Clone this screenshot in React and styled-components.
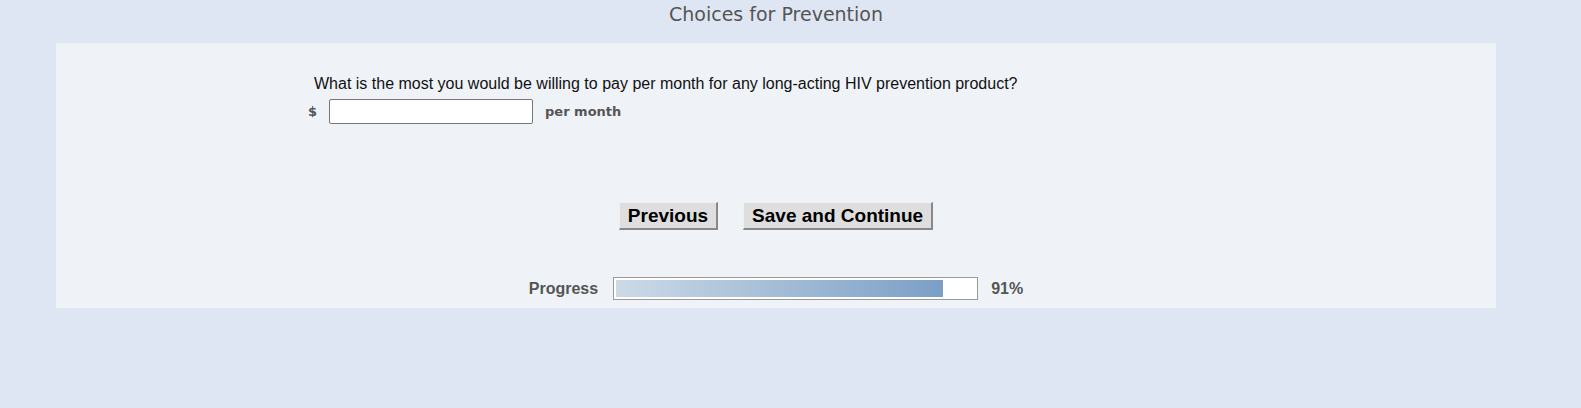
import React from "react";
import styled, { createGlobalStyle } from "styled-components";

const GlobalStyle = createGlobalStyle`
  html, body {
    margin: 0;
    padding: 0;
    background: #dfe6f3;
  }
  body {
    font-family: "Liberation Sans", Arial, sans-serif;
  }
`;

const Page = styled.div`
  width: 1440px;
  margin-left: 56px;
`;

const Title = styled.h1`
  margin: 0;
  height: 43px;
  padding-top: 3px;
  box-sizing: border-box;
  text-align: center;
  font-family: "DejaVu Sans", Tahoma, sans-serif;
  font-weight: normal;
  font-size: 19px;
  color: #555;
`;

const Panel = styled.div`
  background: #eff3f8;
  height: 265px;
  box-sizing: border-box;
  padding-top: 31px;
  display: flex;
  flex-direction: column;
`;

const QuestionBlock = styled.div`
  padding-left: 252px;
  display: flex;
  flex-direction: column;
  gap: 6px;
`;

const Question = styled.div`
  padding-left: 6px;
  font-size: 16px;
  color: #111;
  line-height: 19px;
`;

const AnswerRow = styled.div`
  display: flex;
  align-items: center;
`;

const Unit = styled.span`
  font-family: "DejaVu Sans", Verdana, sans-serif;
  font-weight: bold;
  font-size: 13px;
  color: #555;
  margin-right: ${(p) => (p.$prefix ? "12px" : "0")};
  margin-left: ${(p) => (p.$prefix ? "0" : "12px")};
`;

const Amount = styled.input`
  width: 204px;
  height: 25px;
  box-sizing: border-box;
  border: 1px solid #767676;
  border-radius: 2px;
  background: #fff;
  padding: 1px 4px;
  font-size: 14px;
`;

const Buttons = styled.div`
  margin-top: 78px;
  display: flex;
  justify-content: center;
  gap: 25px;
`;

const NavButton = styled.button`
  font-family: "Liberation Sans", Arial, sans-serif;
  font-weight: bold;
  font-size: 19px;
  height: 28px;
  padding: 0 8px;
  background: #dedede;
  color: #000;
  border-style: solid;
  border-width: 1px 2px 2px 1px;
  border-color: #f0f0f0 #888 #888 #f0f0f0;
  cursor: pointer;
`;

const ProgressRow = styled.div`
  margin-top: 47px;
  display: flex;
  align-items: center;
  justify-content: center;
`;

const Label = styled.span`
  font-weight: bold;
  font-size: 16px;
  color: #555;
`;

const Track = styled.div`
  margin: 0 13px 0 15px;
  width: 365px;
  height: 23px;
  box-sizing: border-box;
  border: 1px solid #999;
  background: #fff;
  padding: 2px;
`;

const Fill = styled.div`
  height: 100%;
  background: linear-gradient(to right, #ccdae7, #7b9fc6);
`;

export default function App() {
  const pct = 91;
  return (
    <>
      <GlobalStyle />
      <Page>
        <Title>Choices for Prevention</Title>
        <Panel>
          <QuestionBlock>
            <Question>
              What is the most you would be willing to pay per month for any
              long-acting HIV prevention product?
            </Question>
            <AnswerRow>
              <Unit $prefix>$</Unit>
              <Amount type="text" />
              <Unit>per month</Unit>
            </AnswerRow>
          </QuestionBlock>
          <Buttons>
            <NavButton>Previous</NavButton>
            <NavButton>Save and Continue</NavButton>
          </Buttons>
          <ProgressRow>
            <Label>Progress</Label>
            <Track>
              <Fill style={{ width: `${pct}%` }} />
            </Track>
            <Label>{pct}%</Label>
          </ProgressRow>
        </Panel>
      </Page>
    </>
  );
}
